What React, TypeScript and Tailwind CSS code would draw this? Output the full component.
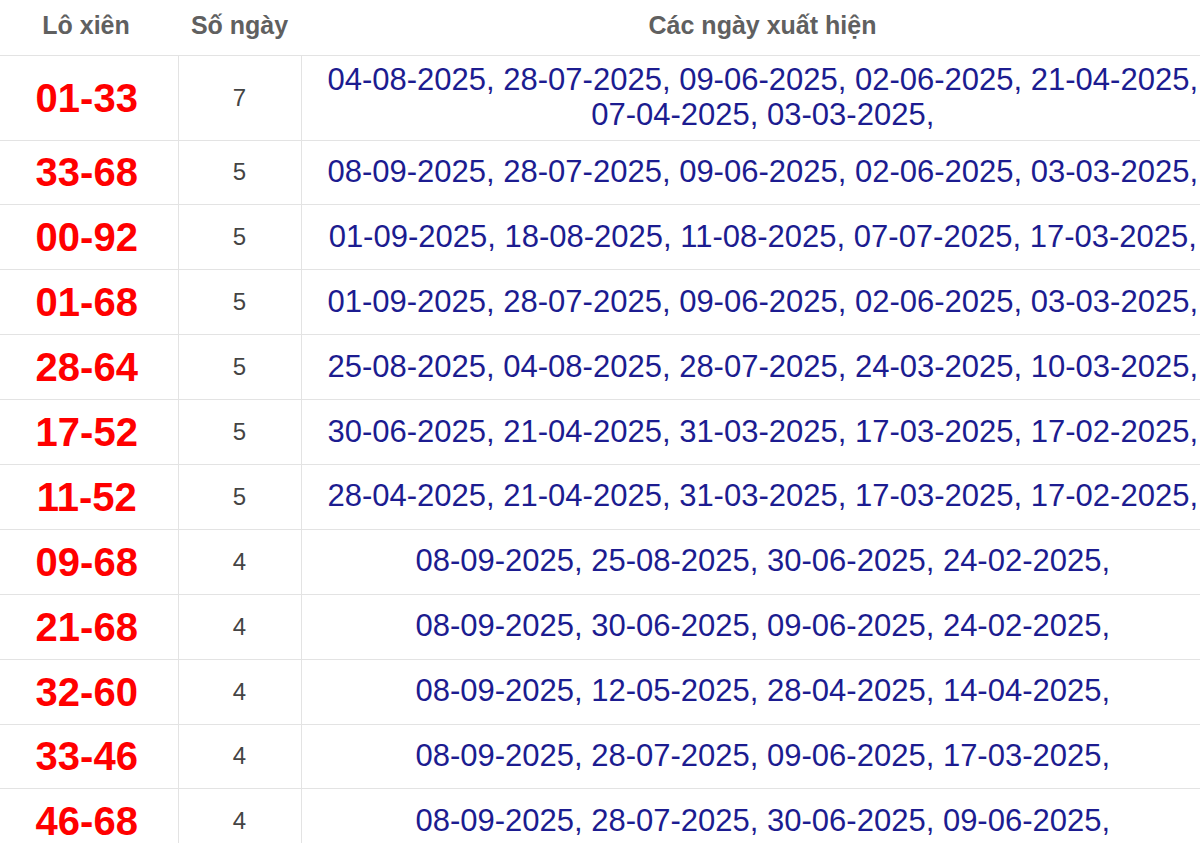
const rows: { pair: string; count: number; dates: string[] }[] = [
  { pair: '01-33', count: 7, dates: ['04-08-2025', '28-07-2025', '09-06-2025', '02-06-2025', '21-04-2025', '07-04-2025', '03-03-2025'] },
  { pair: '33-68', count: 5, dates: ['08-09-2025', '28-07-2025', '09-06-2025', '02-06-2025', '03-03-2025'] },
  { pair: '00-92', count: 5, dates: ['01-09-2025', '18-08-2025', '11-08-2025', '07-07-2025', '17-03-2025'] },
  { pair: '01-68', count: 5, dates: ['01-09-2025', '28-07-2025', '09-06-2025', '02-06-2025', '03-03-2025'] },
  { pair: '28-64', count: 5, dates: ['25-08-2025', '04-08-2025', '28-07-2025', '24-03-2025', '10-03-2025'] },
  { pair: '17-52', count: 5, dates: ['30-06-2025', '21-04-2025', '31-03-2025', '17-03-2025', '17-02-2025'] },
  { pair: '11-52', count: 5, dates: ['28-04-2025', '21-04-2025', '31-03-2025', '17-03-2025', '17-02-2025'] },
  { pair: '09-68', count: 4, dates: ['08-09-2025', '25-08-2025', '30-06-2025', '24-02-2025'] },
  { pair: '21-68', count: 4, dates: ['08-09-2025', '30-06-2025', '09-06-2025', '24-02-2025'] },
  { pair: '32-60', count: 4, dates: ['08-09-2025', '12-05-2025', '28-04-2025', '14-04-2025'] },
  { pair: '33-46', count: 4, dates: ['08-09-2025', '28-07-2025', '09-06-2025', '17-03-2025'] },
  { pair: '46-68', count: 4, dates: ['08-09-2025', '28-07-2025', '30-06-2025', '09-06-2025'] },
];

export default function App() {
  return (
    <div className="w-[1200px] h-[843px] overflow-hidden bg-white" style={{ fontFamily: '"Liberation Sans", Arial, sans-serif' }}>
      <table className="w-[1224px] table-fixed border-collapse">
        <colgroup>
          <col className="w-[178px]" />
          <col className="w-[123px]" />
          <col />
        </colgroup>
        <thead>
          <tr className="h-[55px] border-b border-[#e3e3e3]">
            <th className="text-[25px] font-bold text-[#606060] text-center align-middle pb-[3px] pr-[6px]">Lô xiên</th>
            <th className="text-[25px] font-bold text-[#606060] text-center align-middle pb-[3px]">Số ngày</th>
            <th className="text-[25px] font-bold text-[#606060] text-center align-middle pb-[3px]">Các ngày xuất hiện</th>
          </tr>
        </thead>
        <tbody>
          {rows.map((r, i) => (
            <tr key={r.pair + i} className={`${i === 0 ? 'h-[85px]' : 'h-[64.9px]'} border-b border-[#e3e3e3]`}>
              <td className="border-r border-[#e3e3e3] text-center align-middle text-[40px] font-bold text-[#f00] leading-none pr-[4px]">
                {r.pair}
              </td>
              <td className="border-r border-[#e3e3e3] text-center align-middle text-[24px] text-[#444] leading-none">
                {r.count}
              </td>
              <td className="text-center align-middle text-[31px] text-[#1c1c90] leading-[35px] px-[8px] pb-[2px]">
                {r.dates.map((d) => (
                  <span key={d}>
                    <span className="whitespace-nowrap">{d},</span>{' '}
                  </span>
                ))}
              </td>
            </tr>
          ))}
        </tbody>
      </table>
    </div>
  );
}
